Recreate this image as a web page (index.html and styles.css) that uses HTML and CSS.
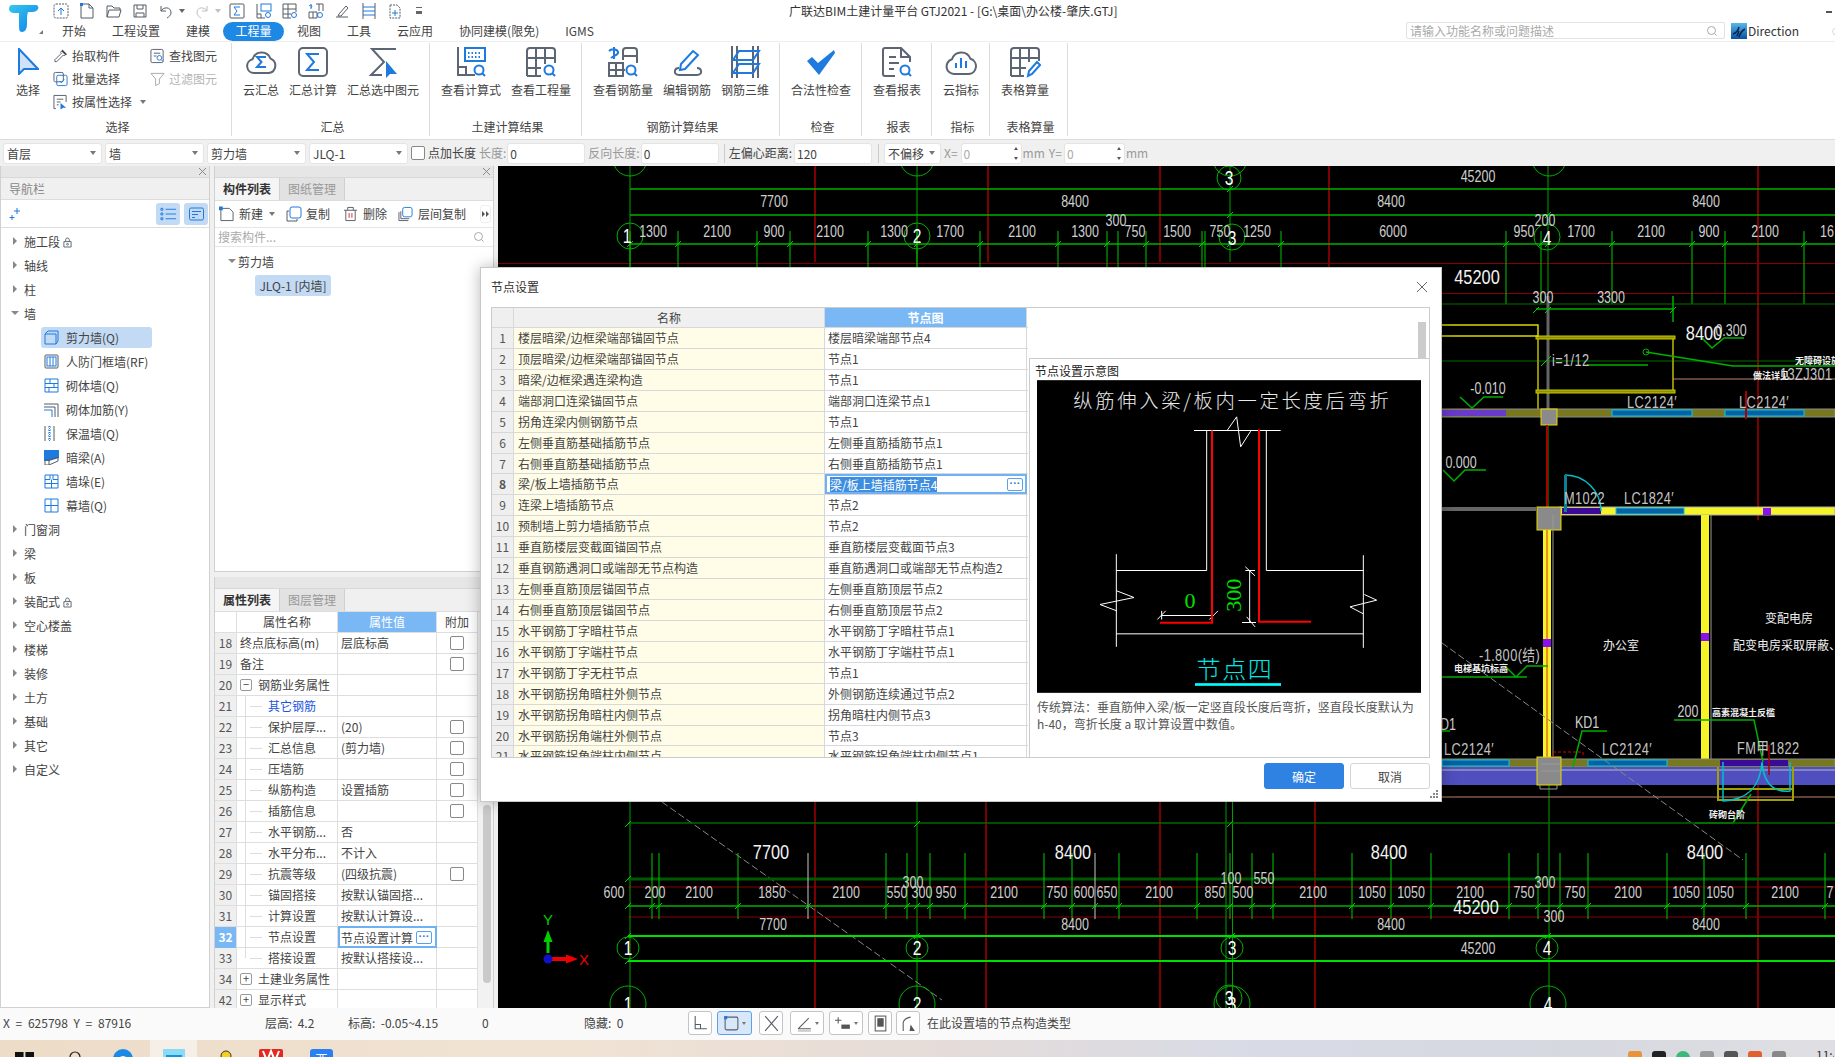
FILE: index.html
```html
<!DOCTYPE html>
<html lang="zh-CN">
<head>
<meta charset="utf-8">
<title>广联达BIM土建计量平台 GTJ2021</title>
<link rel="stylesheet" href="styles.css">
</head>
<body>
<div class="app">

<header class="top">
  <div class="logo-col">
    <svg class="logo" viewBox="0 0 30 29"><defs><linearGradient id="lg" x1="0" y1="0" x2="1" y2="1"><stop offset="0" stop-color="#35c8ee"/><stop offset="1" stop-color="#0f7fe8"/></linearGradient></defs><path fill="url(#lg)" d="M3 1h23c3 0 4 2 3 4s-3 3-6 3h-4c-1 2-1 6-1 12 0 5-2 8-5 8s-3-3-3-8V9H5C2 9 0 7 0 5s1-4 3-4z"/></svg>
    <span class="logo-tri"></span>
  </div>
  <div class="top-right">
    <div class="titlebar">
      <div class="quick">
        <svg class="q" viewBox="0 0 18 18"><rect x="2" y="2" width="14" height="14" rx="2" class="ln dash"/><path d="M9 13V6M6 9l3-3 3 3" class="lnb"/></svg>
        <svg class="q" viewBox="0 0 18 18"><path d="M3 2h8l4 4v10H3z" class="ln"/><path d="M11 2v4h4" class="ln"/><rect x="2" y="1" width="3" height="3" class="fb"/></svg>
        <svg class="q" viewBox="0 0 18 18"><path d="M2 15V4h5l2 2h6v2M2 15l2-7h12l-2 7z" class="ln"/></svg>
        <svg class="q" viewBox="0 0 18 18"><path d="M3 3h12v12H3zM6 3v4h6V3M5 15v-4h8v4" class="ln"/></svg>
        <svg class="q" viewBox="0 0 18 18"><path d="M4 4v5h5M4 9c2-4 10-5 10 2 0 2-2 4-4 5" class="ln"/></svg>
        <span class="q-tri"></span>
        <svg class="q q-off" viewBox="0 0 18 18"><path d="M14 4v5H9M14 9c-2-4-10-5-10 2 0 2 2 4 4 5" class="ln"/></svg>
        <span class="q-tri q-off"></span>
        <svg class="q" viewBox="0 0 18 18"><rect x="2" y="2" width="14" height="14" rx="1" class="ln"/><path d="M12 5H6l3 4-3 4h6" class="lnb"/></svg>
        <svg class="q" viewBox="0 0 18 18"><path d="M2 2v14h8M2 12h4v4" class="ln"/><rect x="6" y="2" width="10" height="7" class="lnb"/><circle cx="13" cy="13" r="2.5" class="lnb"/></svg>
        <svg class="q" viewBox="0 0 18 18"><path d="M2 2h13v8M2 2v14h8M7 2v14M2 7h13M2 12h8" class="ln"/><circle cx="13" cy="13" r="2.5" class="lnb"/></svg>
        <svg class="q" viewBox="0 0 18 18"><path d="M9 2h7v7M12 2v7M2 10h8v6H2zM6 10v6" class="ln"/><path d="M4 2v5M2 4c2-2 4 0 2 2" class="lnb"/><circle cx="13" cy="13" r="2.5" class="lnb"/></svg>
        <svg class="q" viewBox="0 0 18 18"><path d="M2 15h12M5 12l7-8 2 2-7 8H4z" class="ln"/></svg>
        <svg class="q" viewBox="0 0 18 18"><path d="M3 1v16M15 1v16" class="ln"/><path d="M3 5h12M3 9h12M3 13h12" class="lnb"/></svg>
        <svg class="q" viewBox="0 0 18 18"><path d="M4 3h7l3 3v10H4z" class="ln dash"/><path d="M9 8v6M6 11h6" class="lnb"/></svg>
        <span class="q-more"></span>
      </div>
      <div class="app-title">广联达BIM土建计量平台 GTJ2021 - [G:\桌面\办公楼-肇庆.GTJ]</div>
      <span class="win-min"></span>
    </div>
    <nav class="menubar">
      <a class="tab">开始</a><a class="tab">工程设置</a><a class="tab">建模</a><a class="tab tab-on">工程量</a><a class="tab">视图</a><a class="tab">工具</a><a class="tab">云应用</a><a class="tab">协同建模(限免)</a><a class="tab">IGMS</a>
      <div class="search">
        <span>请输入功能名称或问题描述</span>
        <svg class="s-ic" viewBox="0 0 12 12"><circle cx="5.5" cy="5.5" r="4" class="lng"/><path d="M8.5 8.5l2 2" class="lng"/></svg>
      </div>
      <svg class="dir-ic" viewBox="0 0 16 16"><defs><linearGradient id="dg" x1="0" y1="0" x2="0" y2="1"><stop offset="0" stop-color="#58b8e8"/><stop offset="1" stop-color="#0a4fa0"/></linearGradient></defs><rect width="16" height="16" fill="url(#dg)"/><path d="M2 11c3-1 5-3 6-7M8 14c1-3 2-6 6-8M6 13l2-5" fill="none" stroke="#06234e" stroke-width="1.5"/></svg>
      <span class="dir-t">Direction</span>
      <svg class="bulb" viewBox="0 0 14 18"><path d="M7 1a6 6 0 0 0-3 11v3h6v-3A6 6 0 0 0 7 1z" class="lng"/></svg>
    </nav>
  </div>
</header>

<section class="ribbon">
  <div class="rg rg-sel">
    <div class="rg-body">
      <div class="rb rb-cur">
        <svg class="ri-cur" viewBox="0 0 21 27"><path d="M1 1l19 20H6L1 26z" fill="#cfe2f8" stroke="#1f7ae0" stroke-width="2"/></svg>
        <span>选择</span>
      </div>
      <div class="sm-col">
        <div class="sm"><svg class="si" viewBox="0 0 16 16"><path d="M10 2l4 4-2 2-1-1-7 7H2v-2l7-7-1-1z" class="ln"/><path d="M10 1l5 5-2 1-4-4z" fill="#444"/></svg><span>抬取构件</span></div>
        <div class="sm"><svg class="si" viewBox="0 0 16 16"><rect x="1" y="1" width="10" height="10" rx="1.5" class="ln"/><rect x="4" y="4" width="11" height="11" rx="1.5" class="lnb" fill="#fff"/><path d="M7 10l2 2 3-4" class="lnb"/></svg><span>批量选择</span></div>
        <div class="sm"><svg class="si" viewBox="0 0 16 16"><path d="M3 15H1V1h13v7" class="ln"/><path d="M4 5h7M4 8h4M4 11h2" class="ln"/><path d="M8 9l6 5h-3l-3 2z" class="fb"/></svg><span>按属性选择</span><i class="tri"></i></div>
      </div>
      <div class="sm-col">
        <div class="sm"><svg class="si" viewBox="0 0 16 16"><rect x="1" y="1" width="13" height="14" rx="1.5" class="ln"/><path d="M4 5h7M4 8h3" class="ln"/><circle cx="10" cy="10" r="2.5" class="lnb"/><path d="M12 12l2 2" class="lnb"/></svg><span>查找图元</span></div>
        <div class="sm sm-off"><svg class="si" viewBox="0 0 16 16"><path d="M1 2h14l-5 6v5l-4 2V8z" class="lng"/></svg><span>过滤图元</span></div>
      </div>
    </div>
    <div class="rg-name">选择</div>
  </div>

  <div class="rg rg-sum">
    <div class="rg-body">
      <div class="rb"><svg class="ri" viewBox="0 0 32 32"><path d="M9 27a7 7 0 0 1-1.500-13.800 9.500 9.500 0 0 1 18-.6A7.500 7.500 0 0 1 24 27z" class="gs"/><path d="M21 11h-9l4.500 5-4.500 5h9" class="bs"/></svg><span>云汇总</span></div>
      <div class="rb"><svg class="ri" viewBox="0 0 32 32"><rect x="2" y="2" width="28" height="28" rx="4" class="gs"/><path d="M22 8H10l7 8-7 8h12" class="bs"/></svg><span>汇总计算</span></div>
      <div class="rb rb-w"><svg class="ri" viewBox="0 0 32 32"><path d="M29 3H5l12 13L4 29h11" class="gs"/><path d="M19 15l11 13h-7l-4 4z" class="fb"/></svg><span>汇总选中图元</span></div>
    </div>
    <div class="rg-name">汇总</div>
  </div>

  <div class="rg rg-civil">
    <div class="rg-body">
      <div class="rb rb-w"><svg class="ri" viewBox="0 0 32 32"><path d="M3 1v28h17M3 21h8v8" class="gs"/><rect x="10" y="2" width="20" height="13" class="bs"/><path d="M13 7h14M13 11h14" class="bs dots"/><circle cx="24" cy="24" r="4.500" class="bs"/><path d="M27 27l3 3" class="bs"/></svg><span>查看计算式</span></div>
      <div class="rb rb-w"><svg class="ri" viewBox="0 0 32 32"><path d="M2 30V5q0-3 3-3h22q3 0 3 3v12M2 12h28M2 22h14M11 2v28M20 2v16M2 30h14" class="gs"/><circle cx="24" cy="24" r="4.500" class="bs"/><path d="M27 27l3 3" class="bs"/></svg><span>查看工程量</span></div>
    </div>
    <div class="rg-name">土建计算结果</div>
  </div>

  <div class="rg rg-rebar">
    <div class="rg-body">
      <div class="rb rb-w"><svg class="ri" viewBox="0 0 32 32"><path d="M7 1v12M2 5c3-3 8-2 9 1s-5 4-7 6" class="bs"/><path d="M16 14V5q0-3 3-3h8q3 0 3 3v12M16 10h14M2 17h14v13H2zM9 17v13M2 24h16" class="gs"/><circle cx="24" cy="24" r="4.500" class="bs"/><path d="M27 27l3 3" class="bs"/></svg><span>查看钢筋量</span></div>
      <div class="rb"><svg class="ri" viewBox="0 0 32 32"><path d="M8 22c-5 0-6 7 0 7h18c6 0 5-7 0-7" class="gs"/><path d="M9 24l1-6L22 5l5 4-13 14z" class="bs"/></svg><span>编辑钢筋</span></div>
      <div class="rb"><svg class="ri" viewBox="0 0 32 32"><path d="M3 0v32M8 0v32M24 0v32M29 0v32" class="gs"/><path d="M10 5h20l-6 9H4zM10 18h20l-6 9H4z" class="bs"/></svg><span>钢筋三维</span></div>
    </div>
    <div class="rg-name">钢筋计算结果</div>
  </div>

  <div class="rg rg-check">
    <div class="rg-body">
      <div class="rb rb-w"><svg class="ri" viewBox="0 0 32 32"><path d="M2 15l5-4 6 6L29 4l1 3-16 22z" class="fb"/></svg><span>合法性检查</span></div>
    </div>
    <div class="rg-name">检查</div>
  </div>

  <div class="rg rg-report">
    <div class="rg-body">
      <div class="rb"><svg class="ri" viewBox="0 0 32 32"><path d="M14 30H4q-2 0-2-2V4q0-2 2-2h16l9 9v5M20 2v9h9" class="gs"/><path d="M8 11h7M8 17h10M8 23h5" class="gs"/><circle cx="24" cy="24" r="4.500" class="bs"/><path d="M27 27l3 3" class="bs"/></svg><span>查看报表</span></div>
    </div>
    <div class="rg-name">报表</div>
  </div>

  <div class="rg rg-idx">
    <div class="rg-body">
      <div class="rb"><svg class="ri" viewBox="0 0 32 32"><path d="M9 28a7.500 7.500 0 0 1-2-14.700 9.800 9.800 0 0 1 18.500-.5A7.800 7.800 0 0 1 24 28z" class="gs"/><path d="M11 22v-5M16 22V12M21 22v-7" class="bs"/></svg><span>云指标</span></div>
    </div>
    <div class="rg-name">指标</div>
  </div>

  <div class="rg rg-table">
    <div class="rg-body">
      <div class="rb"><svg class="ri" viewBox="0 0 32 32"><path d="M2 30V5q0-3 3-3h22q3 0 3 3v10M2 12h28M2 22h15M11 2v28M20 2v14M2 30h13" class="gs"/><path d="M19 30l1-5 8-9 3 3-8 9z" class="bs"/></svg><span>表格算量</span></div>
    </div>
    <div class="rg-name">表格算量</div>
  </div>
</section>

<section class="drawbar">
  <div class="combo c-98 mr3">首层<i class="tri"></i></div>
  <div class="combo c-98 mr3">墙<i class="tri"></i></div>
  <div class="combo c-98 mr3">剪力墙<i class="tri"></i></div>
  <div class="combo c-98 mr3">JLQ-1<i class="tri"></i></div>
  <span class="check mr3"></span>
  <span class="lab mr3">点加长度</span>
  <span class="lab lab-off mr1">长度:</span>
  <div class="inp mr3">0</div>
  <span class="lab lab-off mr1">反向长度:</span>
  <div class="inp mr5">0</div>
  <span class="sep mr4"></span>
  <span class="lab mr2">左偏心距离:</span>
  <div class="inp mr6">120</div>
  <span class="sep mr5"></span>
  <div class="combo c-57 mr3">不偏移<i class="tri"></i></div>
  <span class="lab lab-off mr3">X=</span>
  <div class="spin inp-off mr1">0<i class="spin-a"></i><i class="spin-b"></i></div>
  <span class="lab lab-off mr4">mm</span>
  <span class="lab lab-off mr2">Y=</span>
  <div class="spin inp-off mr1">0<i class="spin-a"></i><i class="spin-b"></i></div>
  <span class="lab lab-off">mm</span>
</section>

<main class="main">
  <aside class="nav">
    <div class="p-head"><span class="p-x"></span></div>
    <div class="nav-title">导航栏</div>
    <div class="nav-tools">
      <svg class="spark" viewBox="0 0 12 12"><path d="M8 0v6M5 3h6M3 7v5M0.500 9.500h5" class="lnb"/></svg>
      <span class="nt-btn"><svg viewBox="0 0 18 14"><path d="M6 2h11M6 7h11M6 12h11" class="lnb"/><path d="M1 1h2v2H1zM1 6h2v2H1zM1 11h2v2H1z" class="lnb"/></svg></span>
      <span class="nt-btn"><svg viewBox="0 0 16 14"><rect x="1" y="1" width="14" height="12" rx="1.500" class="lnb"/><path d="M3.500 4.500h9M3.500 7.500h6M3.500 10.500h3" class="lnb"/></svg></span>
    </div>
    <ul class="tree">
      <li><i class="arr"></i>施工段<svg class="lock" viewBox="0 0 10 12"><path d="M1 5h8v6H1zM3 5V3a2 2 0 0 1 4 0v2" class="ln"/><circle cx="5" cy="8" r="1" class="ln"/></svg></li>
      <li><i class="arr"></i>轴线</li>
      <li><i class="arr"></i>柱</li>
      <li><i class="arr arr-d"></i>墙</li>
      <li class="kid kid-on"><svg class="ki" viewBox="0 0 15 15"><path d="M1 4h11v10H1zM1 4l3-3h10v10l-2 3" class="lnb"/></svg>剪力墙(Q)</li>
      <li class="kid"><svg class="ki" viewBox="0 0 15 15"><rect x="1" y="1" width="13" height="13" rx="1" class="ln"/><rect x="3" y="3" width="9" height="9" class="lnb"/><path d="M6 3v9M9 3v9" class="lnb"/></svg>人防门框墙(RF)</li>
      <li class="kid"><svg class="ki" viewBox="0 0 15 15"><path d="M1 1h13v13H1zM1 5.500h13M1 9.500h13M6 1v4.500M10 5.500v4M5 9.500v4.500" class="lnb"/></svg>砌体墙(Q)</li>
      <li class="kid"><svg class="ki" viewBox="0 0 15 15"><path d="M0 2h14v13M0 5h11v10" class="ln"/><path d="M0 8h8v7" class="lnb"/></svg>砌体加筋(Y)</li>
      <li class="kid"><svg class="ki" viewBox="0 0 15 15"><path d="M1 0v15M10 0v15" class="ln"/><path d="M4 1h4M4 4h4M4 7h4M4 10h4M4 13h4M5.500 0v15" class="lnb dots2"/></svg>保温墙(Q)</li>
      <li class="kid"><svg class="ki" viewBox="0 0 15 15"><path d="M0 0h15v8L5 11H0z" class="fb"/><path d="M1 15V10h4v5zM5 10l9-3v4l-9 4" class="ln"/></svg>暗梁(A)</li>
      <li class="kid"><svg class="ki" viewBox="0 0 15 15"><path d="M1 1h13v13H1zM1 5.500h5V1M9 1v4.500h5M1 9.500h13M7.500 5.500v8.500" class="lnb"/></svg>墙垛(E)</li>
      <li class="kid"><svg class="ki" viewBox="0 0 15 15"><path d="M1 1h13v13H1zM1 7.500h13M7 1v13" class="lnb"/></svg>幕墙(Q)</li>
      <li><i class="arr"></i>门窗洞</li>
      <li><i class="arr"></i>梁</li>
      <li><i class="arr"></i>板</li>
      <li><i class="arr"></i>装配式<svg class="lock" viewBox="0 0 10 12"><path d="M1 5h8v6H1zM3 5V3a2 2 0 0 1 4 0v2" class="ln"/><circle cx="5" cy="8" r="1" class="ln"/></svg></li>
      <li><i class="arr"></i>空心楼盖</li>
      <li><i class="arr"></i>楼梯</li>
      <li><i class="arr"></i>装修</li>
      <li><i class="arr"></i>土方</li>
      <li><i class="arr"></i>基础</li>
      <li><i class="arr"></i>其它</li>
      <li><i class="arr"></i>自定义</li>
    </ul>
  </aside>

  <div class="col">
    <section class="panel p-list">
      <div class="p-head"><span class="p-x"></span></div>
      <div class="tabs"><span class="t t-on">构件列表</span><span class="t">图纸管理</span></div>
      <div class="list-tools">
        <svg class="lt" viewBox="0 0 16 16"><path d="M2 2h9l4 4v9H2z" class="ln"/><rect x="0" y="0" width="4" height="4" class="fb"/></svg><span class="lt-t">新建</span><i class="tri tri-m"></i>
        <svg class="lt lt2" viewBox="0 0 16 16"><path d="M3 5H1v10h10v-2" class="ln"/><rect x="4" y="1" width="11" height="11" rx="2" class="lnb"/></svg><span class="lt-t lt-t2">复制</span>
        <svg class="lt lt3" viewBox="0 0 16 16"><path d="M1 4h14M5 4V1h6v3M3 4v11h10V4" class="ln"/><path d="M6.500 7v5M9.500 7v5" class="lnr"/></svg><span class="lt-t">删除</span>
        <svg class="lt lt4" viewBox="0 0 16 16"><path d="M1 6v9h10M3 5v8h9" class="ln"/><rect x="5" y="1" width="10" height="10" rx="2" class="lnb"/></svg><span class="lt-t">层间复制</span>
        <span class="more"><i></i><i></i></span>
      </div>
      <div class="list-search"><span>搜索构件...</span><svg class="s-ic" viewBox="0 0 12 12"><circle cx="5.500" cy="5.500" r="4" class="lng"/><path d="M8.500 8.500l2 2" class="lng"/></svg></div>
      <div class="list-tree">
        <div class="lt-root"><i class="arr arr-d"></i>剪力墙</div>
        <div class="lt-item">JLQ-1 [内墙]</div>
      </div>
    </section>
    <section class="panel p-props">
      <div class="p-head"></div>
      <div class="tabs"><span class="t t-on">属性列表</span><span class="t">图层管理</span></div>
      <div class="prop-wrap">
        <div class="props">
          <div class="pr pr-h"><span class="c-n"></span><span>属性名称</span><span class="h-on">属性值</span><span>附加</span></div>
          <div class="pr"><span class="c-n">18</span><span class="c-l">终点底标高(m)</span><span class="c-l">层底标高</span><span class="c-c"><b class="check"></b></span></div>
          <div class="pr"><span class="c-n">19</span><span class="c-l">备注</span><span></span><span class="c-c"><b class="check"></b></span></div>
          <div class="pr"><span class="c-n">20</span><span class="c-g"><b class="tog">−</b>钢筋业务属性</span><span></span><span></span></div>
          <div class="pr"><span class="c-n">21</span><span class="c-k c-link">其它钢筋</span><span></span><span></span></div>
          <div class="pr"><span class="c-n">22</span><span class="c-k">保护层厚...</span><span class="c-l">(20)</span><span class="c-c"><b class="check"></b></span></div>
          <div class="pr"><span class="c-n">23</span><span class="c-k">汇总信息</span><span class="c-l">(剪力墙)</span><span class="c-c"><b class="check"></b></span></div>
          <div class="pr"><span class="c-n">24</span><span class="c-k">压墙筋</span><span></span><span class="c-c"><b class="check"></b></span></div>
          <div class="pr"><span class="c-n">25</span><span class="c-k">纵筋构造</span><span class="c-l">设置插筋</span><span class="c-c"><b class="check"></b></span></div>
          <div class="pr"><span class="c-n">26</span><span class="c-k">插筋信息</span><span></span><span class="c-c"><b class="check"></b></span></div>
          <div class="pr"><span class="c-n">27</span><span class="c-k">水平钢筋...</span><span class="c-l">否</span><span></span></div>
          <div class="pr"><span class="c-n">28</span><span class="c-k">水平分布...</span><span class="c-l">不计入</span><span></span></div>
          <div class="pr"><span class="c-n">29</span><span class="c-k">抗震等级</span><span class="c-l">(四级抗震)</span><span class="c-c"><b class="check"></b></span></div>
          <div class="pr"><span class="c-n">30</span><span class="c-k">锚固搭接</span><span class="c-l">按默认锚固搭...</span><span></span></div>
          <div class="pr"><span class="c-n">31</span><span class="c-k">计算设置</span><span class="c-l">按默认计算设...</span><span></span></div>
          <div class="pr"><span class="c-n n-on">32</span><span class="c-k">节点设置</span><span class="c-sel">节点设置计算<b class="dots-btn">···</b></span><span></span></div>
          <div class="pr"><span class="c-n">33</span><span class="c-k c-end">搭接设置</span><span class="c-l">按默认搭接设...</span><span></span></div>
          <div class="pr"><span class="c-n">34</span><span class="c-g"><b class="tog">+</b>土建业务属性</span><span></span><span></span></div>
          <div class="pr"><span class="c-n">42</span><span class="c-g"><b class="tog">+</b>显示样式</span><span></span><span></span></div>
        </div>
        <div class="vbar"><i></i></div>
      </div>
    </section>
  </div>

  <div class="canvas">
    <svg class="cad" viewBox="498 166 1337 842">
      <!-- red grid -->
      <g class="r1">
        <path d="M815 166V262M988 166V262M1160 166V262M1329 166V267M1758 166V520"/>
        <path d="M815 802V1008M986 802V1008M1160 802V1008M1315 802V1008M1758 785V1008"/>
      </g>
      <path class="r2" d="M498 263.500H1835M1442 293.500H1835M628 887H1835M628 917H1835"/>
      <!-- green axes and dims top -->
      <path class="g1" d="M630 166V1008M917 166V1008M1230 166V262M1232.500 802V1008M1226 802V1008M1548 166V530M1549 780V1008"/>
      <path class="g2" d="M630 189H1835M630 215H1835M630 244H1835"/>
      <path class="g0" d="M630 231V267M678 231V267M757 231V267M790 231V267M868 231V267M917 231V267M980 231V267M1058 231V267M1107 231V267M1118 231V267M1146 231V267M1202 231V267M1205 231V267M1281 231V267M1506 231V304M1541 231V304M1612 231V304M1692 231V304M1725 231V304M1804 231V304"/>
      <path class="g3" d="M1442 304H1835M1442 361H1835"/>
      <path class="g4" d="M627 247l6-6M675 247l6-6M754 247l6-6M787 247l6-6M865 247l6-6M914 247l6-6M977 247l6-6M1055 247l6-6M1104 247l6-6M1143 247l6-6M1199 247l6-6M1227 247l6-6M1278 247l6-6M1503 247l6-6M1538 247l6-6M1545 247l6-6M1609 247l6-6M1689 247l6-6M1722 247l6-6M1801 247l6-6M1545 218l6-6M1227 218l6-6M1227 192l6-6"/>
      <!-- top circles -->
      <g class="gc">
        <circle cx="630" cy="159" r="17"/><circle cx="917" cy="159" r="17"/><circle cx="1230" cy="159" r="17"/><circle cx="1549" cy="159" r="17"/>
        <circle cx="1229" cy="178" r="12"/><circle cx="630" cy="236" r="13"/><circle cx="917" cy="236" r="13"/><circle cx="1232" cy="237" r="13"/><circle cx="1547" cy="237" r="13"/>
      </g>
      <g class="ax">
        <text x="1229" y="185">3</text><text x="627" y="243">1</text><text x="917" y="243">2</text><text x="1232" y="245">3</text><text x="1547" y="245">4</text>
      </g>
      <g class="d">
        <text x="1478" y="182">45200</text>
        <text x="774" y="207">7700</text><text x="1075" y="207">8400</text><text x="1391" y="207">8400</text><text x="1706" y="207">8400</text>
        <text x="653" y="237">1300</text><text x="717" y="237">2100</text><text x="774" y="237">900</text><text x="830" y="237">2100</text><text x="894" y="237">1300</text><text x="950" y="237">1700</text><text x="1022" y="237">2100</text><text x="1085" y="237">1300</text><text x="1116" y="226">300</text><text x="1135" y="237">750</text><text x="1177" y="237">1500</text><text x="1220" y="237">750</text><text x="1257" y="237">1250</text><text x="1393" y="237">6000</text><text x="1524" y="237">950</text><text x="1545" y="226">200</text><text x="1581" y="237">1700</text><text x="1651" y="237">2100</text><text x="1709" y="237">900</text><text x="1765" y="237">2100</text><text x="1827" y="237">16</text>
      </g>

      <!-- plan: upper olive room -->
      <path class="gr" d="M1548 296V409"/>
      <path class="ol" d="M1538 337V410M1673 337V392"/>
      <rect class="ol" x="1536" y="336" width="139" height="3"/>
      <rect class="ol" x="1536" y="390" width="139" height="3"/>
      <path class="yl" d="M1442 325H1538V337M1442 336H1538"/>
      <path class="g2" d="M1536 309H1673M1673 296V322M1646 352L1733 366H1835M1587 365H1648M1460 397L1472 408L1484 397H1503M1443 470L1454 481L1465 470H1486M1702 338L1712 348L1724 338H1744"/>
      <circle class="gc" cx="1646" cy="352" r="3"/>
      <path class="g4" d="M1533 313l6-6M1545 313l6-6M1670 313l6-6M1541 366l10-10"/>
      <path class="pk" d="M1673 379H1835M1442 797H1835"/>
      <!-- walls -->
      <rect class="w-ol" x="1442" y="409" width="393" height="8"/>
      <rect class="w-pu" x="1442" y="410" width="64" height="6"/>
      <rect class="w-bl" x="1612" y="410" width="80" height="6"/>
      <rect class="w-bl" x="1725" y="410" width="79" height="6"/>
      <rect class="col-g" x="1541" y="409" width="16" height="16"/>
      <path class="r3" d="M1547 425V507M1746 391V419"/>
      <rect class="w-dg" x="1442" y="507" width="94" height="4"/>
      <rect class="w-ye" x="1560" y="507" width="275" height="8"/>
      <rect class="w-pd" x="1562" y="508" width="39" height="6"/>
      <rect class="w-bl" x="1616" y="508" width="68" height="6"/>
      <rect class="w-vi" x="1763" y="508" width="8" height="7"/>
      <rect class="col-g" x="1537" y="507" width="24" height="23"/>
      <path class="door" d="M1565 475A36 36 0 0 1 1601 511"/>
      <rect class="door-f" x="1564" y="475" width="3" height="37"/>
      <!-- vertical walls -->
      <rect class="w-ye2" x="1543" y="530" width="8" height="227"/>
      <path class="or" d="M1547 530V757"/>
      <path class="gy" d="M1553 515V757M1711 515V760"/>
      <rect class="w-ye2" x="1701" y="515" width="8" height="245"/>
      <rect class="w-vi" x="1543" y="639" width="8" height="8"/>
      <rect class="w-vi" x="1701" y="633" width="8" height="8"/>
      <!-- bottom wall -->
      <rect class="w-ol" x="1442" y="759" width="393" height="8"/>
      <rect class="w-pp" x="1442" y="767" width="393" height="18"/>
      <path class="wl" d="M1442 770H1835"/>
      <rect class="w-bl" x="1442" y="760" width="67" height="6"/>
      <rect class="w-bl" x="1588" y="760" width="79" height="6"/>
      <rect class="w-pd" x="1720" y="760" width="68" height="6"/>
      <rect class="col-g" x="1537" y="757" width="24" height="28"/>
      <path class="gy" d="M1540 785V789H1557V785M1541 764H1560M1541 771H1560"/>
      <path class="red-d" d="M1553 757V752H1583V757"/>
      <path class="ol2" d="M1718 767V800H1793V767M1718 789H1793"/>
      <path class="door" d="M1723 762V801C1745 800 1760 790 1762 762C1764 790 1780 792 1790 791V762"/>
      <path class="g2" d="M1573 767L1582 731H1607M1674 720H1754L1763 762M1695 823H1733L1751 794M1505 666L1516 677L1527 666H1548M1442 677H1527M1442 731H1450"/>
      <path class="r1" d="M1769 745V775"/>
      <path class="dg" d="M1442 643L1743 860M662 802L942 1000"/>
      <!-- plan text -->
      <g class="t1">
        <text x="1477" y="284">45200</text><text x="1704" y="340">8400</text>
      </g>
      <g class="d">
        <text x="1543" y="303">300</text><text x="1611" y="303">3300</text><text x="1731" y="336">0.300</text><text x="1488" y="394">-0.010</text><text x="1461" y="468">0.000</text><text x="1587" y="728">KD1</text><text x="1448" y="730">D1</text><text x="1688" y="717">200</text>
      </g>
      <g class="ds">
        <text x="1552" y="366">i=1/12</text><text x="1627" y="408">LC2124′</text><text x="1739" y="408">LC2124′</text><text x="1564" y="504">M1022</text><text x="1624" y="504">LC1824′</text><text x="1444" y="755">LC2124′</text><text x="1602" y="755">LC2124′</text><text x="1737" y="754">FM甲1822</text><text x="1479" y="661">-1.800(结)</text><text x="1780" y="380">13ZJ301</text>
      </g>
      <g class="cn">
        <text x="1795" y="364">无障碍设施</text><text x="1753" y="379">做法详见</text><text x="1454" y="672">电梯基坑标高</text><text x="1712" y="716">高素混凝土反槛</text><text x="1709" y="818">砖砌台阶</text>
      </g>
      <g class="cn2">
        <text x="1603" y="650">办公室</text><text x="1765" y="623">变配电房</text><text x="1733" y="650">配变电房采取屏蔽、降噪等</text>
      </g>

      <!-- bottom dims -->
      <path class="g5" d="M628 823H1835"/>
      <path class="g6" d="M628 879H1835"/>
      <path class="g2" d="M628 906H1835"/>
      <path class="g7" d="M628 936H1835M628 961H1835"/>
      <path class="g0" d="M652 853V919M659 853V919M738 853V919M886 853V919M907 853V919M930 853V919M965 853V919M1044 853V919M1072 853V919M1119 853V919M1197 853V919M1230 853V919M1252 853V919M1273 853V919M1352 853V919M1391 853V919M1431 853V919M1509 853V919M1538 853V919M1560 853V919M1588 853V919M1667 853V919M1704 853V919M1746 853V919M1825 853V919"/>
      <path class="w1" d="M808 853V919M1095 853V919"/>
      <path class="g4" d="M625 909l6-6M649 909l6-6M656 909l6-6M735 909l6-6M805 909l6-6M883 909l6-6M904 909l6-6M914 909l6-6M927 909l6-6M962 909l6-6M1041 909l6-6M1069 909l6-6M1092 909l6-6M1116 909l6-6M1194 909l6-6M1227 909l6-6M1249 909l6-6M1270 909l6-6M1349 909l6-6M1388 909l6-6M1428 909l6-6M1506 909l6-6M1535 909l6-6M1557 909l6-6M1585 909l6-6M1664 909l6-6M1701 909l6-6M1743 909l6-6M1822 909l6-6M625 827l6-6M914 827l6-6M1227 827l6-6M625 882l6-6M625 939l6-6M914 939l6-6M1229 939l6-6M1545 939l6-6M625 964l6-6"/>
      <g class="gc">
        <circle cx="628" cy="948" r="11"/><circle cx="917" cy="948" r="11"/><circle cx="1232" cy="948" r="11"/><circle cx="1547" cy="948" r="11"/>
        <circle cx="628" cy="1004" r="18"/><circle cx="917" cy="1004" r="18"/><circle cx="1232" cy="1004" r="18"/><circle cx="1229" cy="998" r="13"/><circle cx="1548" cy="1004" r="18"/>
      </g>
      <g class="ax">
        <text x="628" y="955">1</text><text x="917" y="955">2</text><text x="1232" y="955">3</text><text x="1547" y="955">4</text>
        <text x="628" y="1011">1</text><text x="917" y="1011">2</text><text x="1229" y="1005">3</text><text x="1232" y="1011">3</text><text x="1548" y="1011">4</text>
      </g>
      <g class="t1">
        <text x="771" y="859">7700</text><text x="1073" y="859">8400</text><text x="1389" y="859">8400</text><text x="1705" y="859">8400</text><text x="1476" y="914">45200</text>
      </g>
      <g class="d">
        <text x="614" y="898">600</text><text x="655" y="898">200</text><text x="699" y="898">2100</text><text x="772" y="898">1850</text><text x="846" y="898">2100</text><text x="897" y="898">550</text><text x="913" y="888">300</text><text x="922" y="898">300</text><text x="946" y="898">950</text><text x="1004" y="898">2100</text><text x="1057" y="898">750</text><text x="1084" y="898">600</text><text x="1107" y="898">650</text><text x="1159" y="898">2100</text><text x="1215" y="898">850</text><text x="1243" y="898">500</text><text x="1231" y="884">100</text><text x="1264" y="884">550</text><text x="1313" y="898">2100</text><text x="1372" y="898">1050</text><text x="1411" y="898">1050</text><text x="1470" y="898">2100</text><text x="1524" y="898">750</text><text x="1545" y="888">300</text><text x="1554" y="922">300</text><text x="1575" y="898">750</text><text x="1628" y="898">2100</text><text x="1686" y="898">1050</text><text x="1720" y="898">1050</text><text x="1785" y="898">2100</text><text x="1830" y="898">7</text>
        <text x="773" y="930">7700</text><text x="1075" y="930">8400</text><text x="1391" y="930">8400</text><text x="1706" y="930">8400</text><text x="1478" y="954">45200</text>
      </g>
      <!-- axes gizmo -->
      <path class="gz-g" d="M548 953V940"/><path class="gz-gf" d="M548 930l-4.500 12h9z"/>
      <path class="gz-r" d="M552 959H568"/><path class="gz-rf" d="M578 959l-12-4.500v9z"/>
      <circle class="gz-b" cx="548" cy="959" r="4.500"/>
      <text class="gz-y" x="548" y="925">Y</text><text class="gz-x" x="584" y="965">X</text>
    </svg>
  </div>
</main>

<footer class="status">
  <span class="st st-xy">X = 625798 Y = 87916</span>
  <span class="st st-h">层高:&nbsp; 4.2</span>
  <span class="st st-e">标高:&nbsp; -0.05~4.15</span>
  <span class="st st-z">0</span>
  <span class="st st-hid">隐藏:&nbsp; 0</span>
  <span class="sb"><svg viewBox="0 0 16 16"><path d="M3 1v12h11M3 9h5v4" class="ln"/></svg></span>
  <span class="sb sb-on sb-w sb-gap"><svg viewBox="0 0 16 16"><rect x="2" y="2" width="12" height="12" rx="1.500" class="ln"/><rect x="1" y="1" width="3" height="3" class="fb"/></svg><i class="tri tri-s"></i></span>
  <span class="sb sb-gap"><svg viewBox="0 0 16 16"><path d="M2 1l12 14M14 1L2 15" class="ln"/></svg></span>
  <span class="sb sb-w"><svg viewBox="0 0 16 16"><path d="M2 13L12 3M2 13h12" class="ln"/><path d="M2 15h12" class="lng"/></svg><i class="tri tri-s"></i></span>
  <span class="sb sb-w"><svg viewBox="0 0 16 16"><path d="M3 2v6M0 5h6" class="ln"/><rect x="6" y="9" width="8" height="4" fill="#555"/></svg><i class="tri tri-s"></i></span>
  <span class="sb sb-n"><svg viewBox="0 0 16 16"><rect x="3" y="1" width="10" height="14" class="ln"/><rect x="5" y="3" width="6" height="8" fill="#555"/></svg></span>
  <span class="sb"><svg viewBox="0 0 16 16"><path d="M3 15V7q1-4 7-5" class="ln"/><path d="M10 9l4 6h-5z" fill="#555"/></svg></span>
  <span class="st st-hint">在此设置墙的节点构造类型</span>
</footer>

<div class="taskbar">
  <svg class="tk tk-win" viewBox="0 0 20 20"><path d="M0 0h9v9H0zM11 0h9v9h-9zM0 11h9v9H0zM11 11h9v9h-9z" fill="#111"/></svg>
  <svg class="tk tk-srch" viewBox="0 0 12 20"><circle cx="6" cy="6" r="5" fill="none" stroke="#222" stroke-width="1.200"/></svg>
  <svg class="tk tk-edge" viewBox="0 0 22 22"><circle cx="11" cy="11" r="10" fill="#1a8ae6"/><circle cx="11" cy="13" r="5" fill="#f4ede2"/></svg>
  <span class="tk-active"><svg viewBox="0 0 24 24"><rect x="1" y="1" width="22" height="22" rx="3" fill="#fff"/><rect x="1" y="1" width="22" height="8" fill="#8adcf4"/><rect x="4" y="7" width="16" height="5" fill="#1a90e0"/></svg></span>
  <svg class="tk tk-key" viewBox="0 0 14 20"><circle cx="8" cy="6" r="5" fill="#f5d020" stroke="#333"/><path d="M1 9h5" stroke="#777" stroke-width="2"/></svg>
  <svg class="tk tk-wps" viewBox="0 0 24 20"><rect width="24" height="20" rx="2" fill="#e32a22"/><path d="M4 2l4 10 4-10 4 10 4-10" fill="none" stroke="#fff" stroke-width="2"/></svg>
  <span class="tk-blue">西</span>
  <span class="tray">
    <i class="dot d1"></i><i class="dot d2"></i><i class="dot d3"></i><i class="dot d4"></i><i class="dot d5"></i><i class="dot d6"></i><i class="dot d7"></i>
    <span class="clock">11:4</span>
  </span>
</div>

<!-- dialog -->
<div class="dlg">
  <div class="dlg-head"><span>节点设置</span><svg class="dlg-x" viewBox="0 0 12 12"><path d="M1 1l10 10M11 1L1 11"/></svg></div>
  <div class="dlg-body">
    <div class="nt">
      <div class="nr nr-h"><span class="nn"></span><span class="nh">名称</span><span class="nh nh-on">节点图</span></div>
      <div class="nr"><span class="nn">1</span><span class="na">楼层暗梁/边框梁端部锚固节点</span><span class="nv">楼层暗梁端部节点4</span></div>
      <div class="nr"><span class="nn">2</span><span class="na">顶层暗梁/边框梁端部锚固节点</span><span class="nv">节点1</span></div>
      <div class="nr"><span class="nn">3</span><span class="na">暗梁/边框梁遇连梁构造</span><span class="nv">节点1</span></div>
      <div class="nr"><span class="nn">4</span><span class="na">端部洞口连梁锚固节点</span><span class="nv">端部洞口连梁节点1</span></div>
      <div class="nr"><span class="nn">5</span><span class="na">拐角连梁内侧钢筋节点</span><span class="nv">节点1</span></div>
      <div class="nr"><span class="nn">6</span><span class="na">左侧垂直筋基础插筋节点</span><span class="nv">左侧垂直筋插筋节点1</span></div>
      <div class="nr"><span class="nn">7</span><span class="na">右侧垂直筋基础插筋节点</span><span class="nv">右侧垂直筋插筋节点1</span></div>
      <div class="nr"><span class="nn n-on">8</span><span class="na">梁/板上墙插筋节点</span><span class="nv nv-sel"><em>梁/板上墙插筋节点4</em><b class="dots-btn">···</b></span></div>
      <div class="nr"><span class="nn">9</span><span class="na">连梁上墙插筋节点</span><span class="nv">节点2</span></div>
      <div class="nr"><span class="nn">10</span><span class="na">预制墙上剪力墙插筋节点</span><span class="nv">节点2</span></div>
      <div class="nr"><span class="nn">11</span><span class="na">垂直筋楼层变截面锚固节点</span><span class="nv">垂直筋楼层变截面节点3</span></div>
      <div class="nr"><span class="nn">12</span><span class="na">垂直钢筋遇洞口或端部无节点构造</span><span class="nv">垂直筋遇洞口或端部无节点构造2</span></div>
      <div class="nr"><span class="nn">13</span><span class="na">左侧垂直筋顶层锚固节点</span><span class="nv">左侧垂直筋顶层节点2</span></div>
      <div class="nr"><span class="nn">14</span><span class="na">右侧垂直筋顶层锚固节点</span><span class="nv">右侧垂直筋顶层节点2</span></div>
      <div class="nr"><span class="nn">15</span><span class="na">水平钢筋丁字暗柱节点</span><span class="nv">水平钢筋丁字暗柱节点1</span></div>
      <div class="nr"><span class="nn">16</span><span class="na">水平钢筋丁字端柱节点</span><span class="nv">水平钢筋丁字端柱节点1</span></div>
      <div class="nr"><span class="nn">17</span><span class="na">水平钢筋丁字无柱节点</span><span class="nv">节点1</span></div>
      <div class="nr"><span class="nn">18</span><span class="na">水平钢筋拐角暗柱外侧节点</span><span class="nv">外侧钢筋连续通过节点2</span></div>
      <div class="nr"><span class="nn">19</span><span class="na">水平钢筋拐角暗柱内侧节点</span><span class="nv">拐角暗柱内侧节点3</span></div>
      <div class="nr"><span class="nn">20</span><span class="na">水平钢筋拐角端柱外侧节点</span><span class="nv">节点3</span></div>
      <div class="nr"><span class="nn">21</span><span class="na">水平钢筋拐角端柱内侧节点</span><span class="nv">水平钢筋拐角端柱内侧节点1</span></div>
    </div>
    <div class="dside">
      <div class="dside-top"><i class="dscroll"></i></div>
      <div class="dpanel">
        <div class="dcap">节点设置示意图</div>
        <svg class="node" viewBox="51 90 1152 938">
          <rect x="51" y="90" width="1152" height="938" fill="#000"/>
          <text class="n-title" x="637" y="174">纵筋伸入梁/板内一定长度后弯折</text>
          <path class="n-w" d="M522 241H782M622 240L650 200L662 290L692 243M560 241V661H289M739 241V661H1030M289 612V890M1030 615V893M289 851H1030M290 722L342 742L240 763L290 782M1033 733L1070 750L990 770L1030 791"/>
          <path class="n-w" d="M425 796H575M412 808L437 782M568 808L594 782M425 782V808M689 662V817M676 650L705 677M680 800L705 830M676 661H705M666 817H708"/>
          <path class="n-r" d="M576 241V818H420M717 238V815H873"/>
          <text class="n-g" x="510" y="775">0</text>
          <text class="n-g" transform="translate(663 735) rotate(-90)">300</text>
          <text class="n-c" x="645" y="983">节点四</text>
          <rect x="525" y="999" width="258" height="8" fill="#00ffff"/>
        </svg>
        <p class="ddesc">传统算法：垂直筋伸入梁/板一定竖直段长度后弯折，竖直段长度默认为<br>h-40，弯折长度 a 取计算设置中数值。</p>
      </div>
    </div>
  </div>
  <div class="dlg-foot"><button class="btn btn-p">确定</button><button class="btn">取消</button></div>
  <svg class="grip" viewBox="0 0 9 9"><path d="M7 1h2v2H7zM4 4h2v2H4zM7 4h2v2H7zM1 7h2v2H1zM4 7h2v2H4zM7 7h2v2H7z"/></svg>
</div>

</div>
</body>
</html>
```
FILE: styles.css
```css
* { box-sizing: border-box; margin: 0; padding: 0; }
html, body { width: 1835px; height: 1057px; overflow: hidden; background: #fff; }
body { font-family: "Noto Sans CJK SC", "Noto Sans", sans-serif; font-size: 12px; line-height: 16px; color: #444; }
i, em, b { font-style: normal; font-weight: normal; }
ul { list-style: none; }
.app { position: relative; width: 1835px; height: 1057px; display: flex; flex-direction: column; overflow: hidden; }
.mr1 { margin-right: 1px; }
.mr2 { margin-right: 2px; }
.mr3 { margin-right: 3px; }
.mr4 { margin-right: 4px; }
.mr5 { margin-right: 5px; }
.mr6 { margin-right: 6px; }

/* stroke helpers */
.ln, .lnb, .lng, .lnr, .gs, .bs { fill: none; stroke-width: 1; }
.ln { stroke: #555c66; }
.lnb { stroke: #1f7ae0; }
.lng { stroke: #a8a8a8; }
.lnr { stroke: #e02020; }
.gs { stroke: #5b6573; stroke-width: 2; }
.bs { stroke: #1f7ae0; stroke-width: 2; }
.fb { fill: #1f7ae0; }
.dash { stroke-dasharray: 2 1; }
.dots { stroke-dasharray: 1.5 2; }
.dots2 { stroke-dasharray: 1 1; }

/* top */
.top { display: flex; height: 42px; border-bottom: 1px solid #eee; flex: none; }
.logo-col { width: 49px; flex: none; padding: 4px 0 0 9px; position: relative; }
.logo { width: 30px; height: 29px; display: block; }
.logo-tri { position: absolute; left: 39px; top: 30px; border-left: 4px solid transparent; border-bottom: 4px solid #777; }
.top-right { flex: 1; display: flex; flex-direction: column; min-width: 0; }
.titlebar { height: 21px; display: flex; align-items: center; position: relative; }
.quick { width: 740px; flex: none; display: flex; align-items: center; padding-left: 3px; gap: 8.300px; }
.q { width: 18px; height: 18px; flex: none; }
.q-off { opacity: .4; }
.q-tri { width: 0; height: 0; border: 3.500px solid transparent; border-top: 4px solid #666; border-bottom: 0; margin-left: -4px; margin-right: -1px; }
.q-more { width: 6px; height: 7px; margin-left: 4px; border-top: 1px solid #666; border-bottom: 3px solid #666; }
.app-title { white-space: nowrap; color: #333; }
.win-min { position: absolute; right: 3px; top: 11px; width: 6px; height: 2px; background: #555; }
.menubar { flex: 1; display: flex; align-items: flex-end; }
.tab { padding: 0 13px; height: 19px; line-height: 18px; color: #444; white-space: nowrap; }
.tab-on { background: #1e88e5; color: #fff; border-radius: 10px; padding: 0 12.500px; }
.search { margin-left: auto; width: 319px; height: 17px; border: 1px solid #e2e2e2; border-radius: 2px; display: flex; align-items: center; justify-content: space-between; padding: 0 6px 0 3px; color: #aaa; line-height: 15px; margin-bottom: 2px; }
.s-ic { width: 12px; height: 12px; flex: none; }
.dir-ic { width: 16px; height: 16px; margin: 0 0 2px 6px; flex: none; }
.dir-t { color: #333; margin-left: 1px; width: 84px; flex: none; margin-bottom: 2px; }
.bulb { width: 6px; height: 18px; flex: none; overflow: hidden; margin-right: -3px; }

/* ribbon */
.ribbon { height: 97px; display: flex; flex: none; background: #fff; }
.rg { display: flex; flex-direction: column; justify-content: space-between; border-right: 1px solid #dcdcdc; height: 93px; margin-top: 1px; padding-top: 3px; flex: none; }
.rg-body { display: flex; gap: 10px; padding-left: 11px; }
.rg-name { text-align: center; color: #444; height: 17px; line-height: 16px; padding-left: 4px; }
.rg-sel { width: 232px; }
.rg-sum { width: 198px; }
.rg-civil { width: 152px; }
.rg-rebar { width: 198px; }
.rg-check { width: 82px; }
.rg-report { width: 70px; }
.rg-idx { width: 58px; }
.rg-table { width: 78px; }
.rg-sel .rg-body { padding-left: 16px; gap: 0; }
.rb { display: flex; flex-direction: column; align-items: center; white-space: nowrap; }
.rb > span { margin-top: 4px; line-height: 16px; }
.ri { width: 32px; height: 32px; flex: none; }
.rb-cur { width: 24px; }
.ri-cur { width: 21px; height: 27px; margin-top: 2px; margin-bottom: 3px; flex: none; }
.sm-col { display: flex; flex-direction: column; gap: 7px; margin-left: 13px; margin-top: 2px; width: 95px; }
.sm-col + .sm-col { margin-left: 4px; }
.sm { display: flex; align-items: center; height: 16px; gap: 4px; white-space: nowrap; }
.si { width: 15px; height: 16px; flex: none; }
.sm-off { color: #b5b5b5; }
.tri { display: inline-block; width: 0; height: 0; border: 3px solid transparent; border-top: 4px solid #777; border-bottom: 0; flex: none; }
.sm .tri { margin-left: 4px; }

/* draw bar */
.drawbar { height: 27px; flex: none; display: flex; align-items: center; padding: 0 0 0 3px; background: #f0f0f0; border-top: 1px solid #dcdcdc; white-space: nowrap; }
.combo { height: 21px; background: #fff; border: 1px solid #e4e4e4; border-radius: 3px; display: flex; align-items: center; justify-content: space-between; padding: 0 5px 0 3px; line-height: 19px; color: #444; flex: none; }
.c-98 { width: 99px; }
.c-57 { width: 57px; }
.check { display: inline-block; width: 14px; height: 14px; border: 1px solid #888; border-radius: 2px; background: #fff; flex: none; }
.lab { color: #444; }
.lab-off { color: #999; }
.inp { height: 21px; width: 78px; background: #fff; border: 1px solid #e4e4e4; border-radius: 3px; padding-left: 2px; line-height: 19px; flex: none; }
.sep { width: 1px; height: 19px; background: #ccc; flex: none; }
.spin { position: relative; width: 61px; height: 21px; background: #fff; border: 1px solid #e4e4e4; border-radius: 3px; padding-left: 2px; line-height: 19px; color: #aaa; flex: none; }
.spin-a, .spin-b { position: absolute; right: 3px; width: 0; height: 0; border: 2.500px solid transparent; }
.spin-a { top: 3px; border-bottom: 3px solid #555; border-top: 0; }
.spin-b { bottom: 3px; border-top: 3px solid #555; border-bottom: 0; }

/* main */
.main { height: 842px; flex: none; display: flex; background: #f0f0f0; }
.nav { width: 210px; flex: none; background: #fff; border-right: 1px solid #d0d0d0; border-bottom: 1px solid #d0d0d0; border-left: 1px solid #d0d0d0; overflow: hidden; display: flex; flex-direction: column; }
.p-head { height: 12px; flex: none; background: #e6e6e6; position: relative; border-bottom: 1px solid #d8d8d8; }
.p-x { position: absolute; right: 3px; top: 2px; width: 7px; height: 7px; background: linear-gradient(45deg, transparent 46%, #888 46%, #888 54%, transparent 54%), linear-gradient(-45deg, transparent 46%, #888 46%, #888 54%, transparent 54%); }
.nav-title { height: 22px; background: #f0f0f0; color: #888; padding-left: 8px; line-height: 21px; border-bottom: 1px solid #ddd; flex: none; }
.nav-tools { height: 28px; flex: none; display: flex; align-items: center; padding-left: 8px; border-bottom: 1px solid #ddd; gap: 4px; }
.spark { width: 12px; height: 12px; margin-right: auto; }
.nt-btn { width: 24px; height: 22px; background: #c2daf3; border-radius: 3px; display: flex; align-items: center; justify-content: center; }
.nt-btn svg { width: 17px; height: 14px; }
.nav-tools .nt-btn:last-child { margin-right: 1px; }
.tree { padding-top: 2px; }
.tree li { height: 24px; line-height: 24px; padding-left: 23px; position: relative; color: #444; display: flex; align-items: center; }
.arr { position: absolute; left: 12px; top: 7px; width: 0; height: 0; border: 4px solid transparent; border-left: 4px solid #888; border-right: 0; }
.arr-d { left: 10px; top: 9px; border: 4px solid transparent; border-top: 4px solid #888; border-bottom: 0; }
.lock { width: 9px; height: 11px; margin-left: 3px; }
.tree .kid { padding-left: 65px; }
.ki { position: absolute; left: 43px; top: 4px; width: 15px; height: 15px; }
.kid-on { z-index: 1; }
.kid-on::before { content: ""; position: absolute; left: 40px; top: 1px; width: 111px; height: 21px; background: #c2daf3; border-radius: 3px; z-index: -1; }

.col { width: 280px; flex: none; margin-left: 4px; display: flex; flex-direction: column; gap: 5px; }
.panel { background: #fff; border-right: 1px solid #d0d0d0; border-left: 1px solid #d0d0d0; display: flex; flex-direction: column; overflow: hidden; }
.p-list { height: 406px; border-bottom: 1px solid #d0d0d0; flex: none; }
.p-props { flex: 1; min-height: 0; }
.tabs { display: flex; height: 23px; background: #f0f0f0; flex: none; border-bottom: 1px solid #ddd; }
.t { width: 65px; text-align: center; line-height: 22px; color: #999; background: #e2e2e2; border-right: 1px solid #d0d0d0; }
.t-on { background: #f5f5f5; color: #333; font-weight: 700; }
.list-tools { height: 27px; flex: none; display: flex; align-items: center; padding-left: 4px; border-bottom: 1px solid #e6e6e6; position: relative; white-space: nowrap; }
.lt { width: 15px; height: 16px; flex: none; }
.lt-t { margin-left: 5px; }
.lt-t2 { margin-left: 4px; }
.tri-m { margin-left: 6px; margin-right: 11px; }
.lt2 { width: 16px; }
.lt3 { margin-left: 13px; }
.lt4 { margin-left: 11px; }
.more { position: absolute; right: 2px; top: 4px; width: 11px; height: 18px; border: 1px solid #eee; border-radius: 3px; display: flex; align-items: center; justify-content: center; gap: 1px; }
.more i { border: 3px solid transparent; border-left: 3px solid #555; border-right: 0; }
.list-search { height: 19px; flex: none; display: flex; align-items: center; justify-content: space-between; padding: 0 8px 0 3px; color: #aaa; border-bottom: 1px solid #e6e6e6; }
.list-tree { padding-top: 3px; position: relative; }
.lt-root { height: 24px; line-height: 24px; padding-left: 23px; position: relative; }
.lt-root .arr-d { left: 13px; }
.lt-item { margin: 1px 0 0 40px; width: 76px; height: 21px; background: #c2daf3; border-radius: 3px; line-height: 21px; text-align: center; white-space: nowrap; }

.prop-wrap { flex: 1; display: flex; min-height: 0; overflow: hidden; }
.props { width: 263px; flex: none; }
.pr { display: grid; grid-template-columns: 22px 101px 99px 41px; height: 21px; border-bottom: 1px solid #dedede; line-height: 20px; }
.pr > span { border-right: 1px solid #dedede; overflow: hidden; white-space: nowrap; position: relative; }
.pr-h { height: 21px; text-align: center; }
.h-on { background: #7ab8f5; color: #fff; }
.c-n { background: #efefef; text-align: center; color: #555; }
.pr-h .c-n { background: #fff; }
.n-on { background: #7ab8f5; color: #fff; font-weight: 700; }
.c-l { padding-left: 3px; }
.c-c { display: flex; align-items: center; justify-content: center; }
.c-g { padding-left: 3px; display: flex; align-items: center; gap: 6px; }
.tog { width: 12px; height: 12px; border: 1px solid #999; border-radius: 2px; line-height: 9px; text-align: center; font-size: 11px; flex: none; display: block; }
.c-k { padding-left: 31px; }
.c-k::before { content: ""; position: absolute; left: 8px; top: 0; bottom: 0; border-left: 1px solid #ddd; }
.c-k::after { content: ""; position: absolute; left: 13px; top: 10px; width: 12px; border-top: 1px solid #ddd; }
.c-end::before { bottom: 10px; }
.c-link { color: #1a55e0; }
.c-sel { border: 2px solid #6fb1f5 !important; padding-left: 1px; line-height: 17px; display: flex; align-items: center; justify-content: space-between; padding-right: 3px; margin-top: -1px; height: 22px; }
.dots-btn { display: block; width: 16px; height: 13px; border: 1px solid #5aa0ea; border-radius: 2px; color: #2a7fe0; font: 700 11px/8px "Liberation Sans", sans-serif; text-align: center; flex: none; }
.vbar { flex: 1; background: #f2f2f2; padding: 193px 0 0 5px; }
.vbar i { display: block; width: 8px; height: 178px; background: #c9c9c9; border-radius: 4px; }

/* canvas */
.canvas { flex: 1; margin-left: 4px; background: #000; overflow: hidden; }
.cad { display: block; width: 1337px; height: 842px; fill: none; }
.r1 { stroke: #a40000; stroke-width: 1.500; fill: none; }
.r2 { stroke: #8a0000; stroke-width: 1; }
.r3 { stroke: #a00; stroke-width: 2; }
.g0 { stroke: #00c800; stroke-width: 1; }
.g1 { stroke: #00a000; stroke-width: 1; }
.g2 { stroke: #00b000; stroke-width: 1.500; }
.g3 { stroke: #007000; stroke-width: 1; }
.g4 { stroke: #00d000; stroke-width: 1; }
.g5 { stroke: #006800; stroke-width: 1.500; }
.g6 { stroke: #005800; stroke-width: 3; }
.g7 { stroke: #00e000; stroke-width: 2; }
.w1 { stroke: #c8c8c8; stroke-width: 1; }
.gc { stroke: #00b000; stroke-width: 1; fill: none; }
.ax text, .d text, .t1 text { text-anchor: middle; transform-box: fill-box; transform-origin: center; transform: scaleX(.78); }
.ax text { fill: #fff; font: 20px "Liberation Sans", sans-serif; }
.d text { fill: #cfcfcf; font: 16px "Liberation Sans", sans-serif; }
.t1 text { fill: #f2f2f2; font: 21px "Liberation Sans", sans-serif; }
.ds text { fill: #c4c4c4; font: 16px "Liberation Sans", "Noto Sans CJK SC", sans-serif; letter-spacing: .5px; transform-box: fill-box; transform-origin: 0 50%; transform: scaleX(.8); }
.cn text { fill: #f0f0f0; font: 700 9px "Noto Sans CJK SC", sans-serif; }
.cn2 text { fill: #f0f0f0; font: 12px "Noto Sans CJK SC", sans-serif; }
.gr { stroke: #666; stroke-width: 3; }
.ol { stroke: #8e8e00; stroke-width: 2; fill: none; }
.ol2 { stroke: #a0a000; stroke-width: 2; fill: none; }
rect.ol { fill: #8e8e00; stroke: #c8c800; stroke-width: 1; }
.yl { stroke: #d8d800; stroke-width: 1.500; fill: none; }
.pk { stroke: #c08070; stroke-width: 1; }
.w-ol { fill: #787820; stroke: #8a8a8a; stroke-width: 1; }
.w-pu { fill: #6a3ac8; }
.w-bl { fill: #0a60a0; stroke: #00c8e8; stroke-width: 1; }
.col-g { fill: #8a8a8a; stroke: #e8d800; stroke-width: 1; }
.w-dg { fill: #666; }
.w-ye { fill: #f4f428; stroke: #aaa; stroke-width: 1; }
.w-ye2 { fill: #f4f428; }
.w-pd { fill: #3c0a98; }
.w-vi { fill: #8a10f0; }
.w-pp { fill: #4f4fc0; }
.wl { stroke: #bbb; stroke-width: 1; }
.or { stroke: #e89020; stroke-width: 2; }
.gy { stroke: #9a9a9a; stroke-width: 1; fill: none; }
.door { stroke: #00c0c8; stroke-width: 1.500; fill: none; }
.door-f { fill: #108090; }
.red-d { stroke: #e00000; stroke-width: 1; stroke-dasharray: 3 2; fill: none; }
.dg { stroke: #888; stroke-width: 1; stroke-dasharray: 7 3; }
.gz-g { stroke: #00d000; stroke-width: 3; }
.gz-gf { fill: #00d000; }
.gz-r { stroke: #f00000; stroke-width: 4; }
.gz-rf { fill: #f00000; }
.gz-b { fill: #1010c8; }
.gz-y { fill: #00d000; font: 15px "Liberation Sans", sans-serif; text-anchor: middle; }
.gz-x { fill: #f00000; font: 15px "Liberation Sans", sans-serif; text-anchor: middle; }

/* status + taskbar */
.status { height: 32px; flex: none; display: flex; align-items: center; background: #fafafa; white-space: nowrap; padding: 0 0 2px 3px; }
.st { color: #444; flex: none; }
.st-xy { width: 262px; word-spacing: 3px; }
.st-h { width: 83px; }
.st-e { width: 134px; }
.st-z { width: 102px; }
.st-hid { width: 104px; }
.st-hint { margin-left: 2px; }
.sb { width: 24px; height: 24px; background: #fff; border: 1px solid #c4c4c4; border-radius: 3px; margin-right: 5px; display: flex; align-items: center; justify-content: center; flex: none; gap: 2px; }
.sb:first-of-type { margin-right: 4px; }
.sb svg { width: 17px; height: 17px; flex: none; }
.sb-w { width: 34px; }
.sb-on { background: #d8e8fa; border-color: #5aa0ea; width: 35px; }
.sb-gap { margin-right: 7px; }
.sb-n { margin-right: 4px; }
.tri-s { border-width: 3px 2.500px 0; }
.taskbar { height: 17px; flex: none; display: flex; align-items: flex-start; overflow: hidden; position: relative; background: linear-gradient(90deg, #ecdcc8 0, #f1e3d3 30%, #e6dcd8 50%, #d8dbe6 68%, #d6d8e0 85%, #dfdfe3 100%); }
.tk { flex: none; }
.tk-win { width: 19px; height: 19px; margin: 12px 0 0 15px; }
.tk-srch { width: 12px; height: 20px; margin: 11px 0 0 35px; }
.tk-edge { width: 22px; height: 22px; margin: 8px 0 0 31px; }
.tk-active { width: 47px; height: 17px; margin-left: 16px; background: #f6efe7; padding: 8px 0 0 12px; flex: none; }
.tk-active svg { width: 24px; height: 24px; display: block; }
.tk-key { width: 14px; height: 20px; margin: 10px 0 0 21px; }
.tk-wps { width: 24px; height: 20px; margin: 9px 0 0 27px; }
.tk-blue { width: 23px; height: 22px; margin: 9px 0 0 27px; background: #2a80f0; border-radius: 3px; color: #fff; text-align: center; line-height: 20px; flex: none; }
.tray { margin-left: auto; display: flex; gap: 10px; align-items: flex-start; padding: 8px 1px 0 0; }
.dot { width: 14px; height: 14px; border-radius: 3px; background: #7a7a7a; flex: none; margin-top: 3px; }
.d1 { background: #e8943a; }
.d2 { background: #222; }
.d3 { background: #3cb878; border-radius: 50%; }
.d4 { background: #999; }
.d5 { background: #555; }
.d6 { background: #e06030; }
.d7 { background: #888; margin-right: 20px; }
.clock { color: #333; line-height: 14px; width: 18px; overflow: hidden; white-space: nowrap; }

/* dialog */
.dlg { position: absolute; left: 480px; top: 267px; width: 962px; height: 535px; background: #fff; border: 1px solid #c8c8c8; box-shadow: 0 0 14px rgba(0, 0, 0, .28); display: flex; flex-direction: column; }
.dlg-head { height: 39px; flex: none; display: flex; align-items: center; justify-content: space-between; padding: 0 13px 2px 10px; color: #333; }
.dlg-x { width: 12px; height: 12px; fill: none; stroke: #666; stroke-width: 1; }
.dlg-body { height: 451px; flex: none; margin: 0 11px 0 10px; display: flex; border: 1px solid #ccc; overflow: hidden; }
.nt { width: 536px; flex: none; }
.nr { display: grid; grid-template-columns: 22px 311px 202px; height: 20.930px; line-height: 20px; border-bottom: 1px solid #d8d8d8; }
.nr > span { border-right: 1px solid #d8d8d8; white-space: nowrap; overflow: hidden; }
.nr-h { height: 20px; text-align: center; }
.nn { background: #efefef; text-align: center; color: #555; }
.nh { background: #f0f0f0; color: #444; }
.nh-on { background: #7ab8f5; color: #fff; font-weight: 700; }
.na { background: #fffde8; padding-left: 4px; }
.nv { padding-left: 3px; background: #fff; }
.nv-sel { border: 2px solid #6fb1f5 !important; display: flex; align-items: center; justify-content: space-between; padding: 0 2px 0 3px; }
.nv-sel em { background: #3d8ee0; color: #fff; line-height: 15px; }
.dside { flex: 1; display: flex; flex-direction: column; }
.dside-top { height: 50px; flex: none; padding: 14px 0 0 390px; }
.dscroll { display: block; width: 8px; height: 36px; background: #ccc; }
.dpanel { flex: 1; margin-left: 1px; border: 1px solid #ccc; border-bottom: 0; border-right: 0; padding: 4px 0 0 7px; }
.dcap { color: #222; height: 17px; line-height: 16px; margin-left: -2px; }
.node { display: block; width: 384px; height: 313px; }
.n-title { fill: #eaeaea; font: 300 58px "Noto Sans CJK SC", sans-serif; letter-spacing: 8px; text-anchor: middle; }
.n-w { fill: none; stroke: #fff; stroke-width: 3; }
.n-r { fill: none; stroke: #f00; stroke-width: 6; }
.n-g { fill: #00e000; font: 66px "Liberation Serif", serif; text-anchor: middle; }
.n-c { fill: #00e8e8; font: 300 72px "Noto Sans CJK SC", sans-serif; letter-spacing: 5px; text-anchor: middle; }
.ddesc { margin-top: 5px; line-height: 17px; color: #555; white-space: nowrap; }
.dlg-foot { flex: 1; display: flex; justify-content: flex-end; align-items: flex-start; gap: 6px; padding: 5px 11px 0 0; }
.btn { width: 80px; height: 26px; background: #fff; border: 1px solid #d4d4d4; border-radius: 3px; font: 12px "Noto Sans CJK SC", sans-serif; color: #444; }
.btn-p { background: #2f82e2; border-color: #2f82e2; color: #fff; }
.grip { position: absolute; right: 3px; bottom: 3px; width: 9px; height: 9px; fill: #888; }
```
